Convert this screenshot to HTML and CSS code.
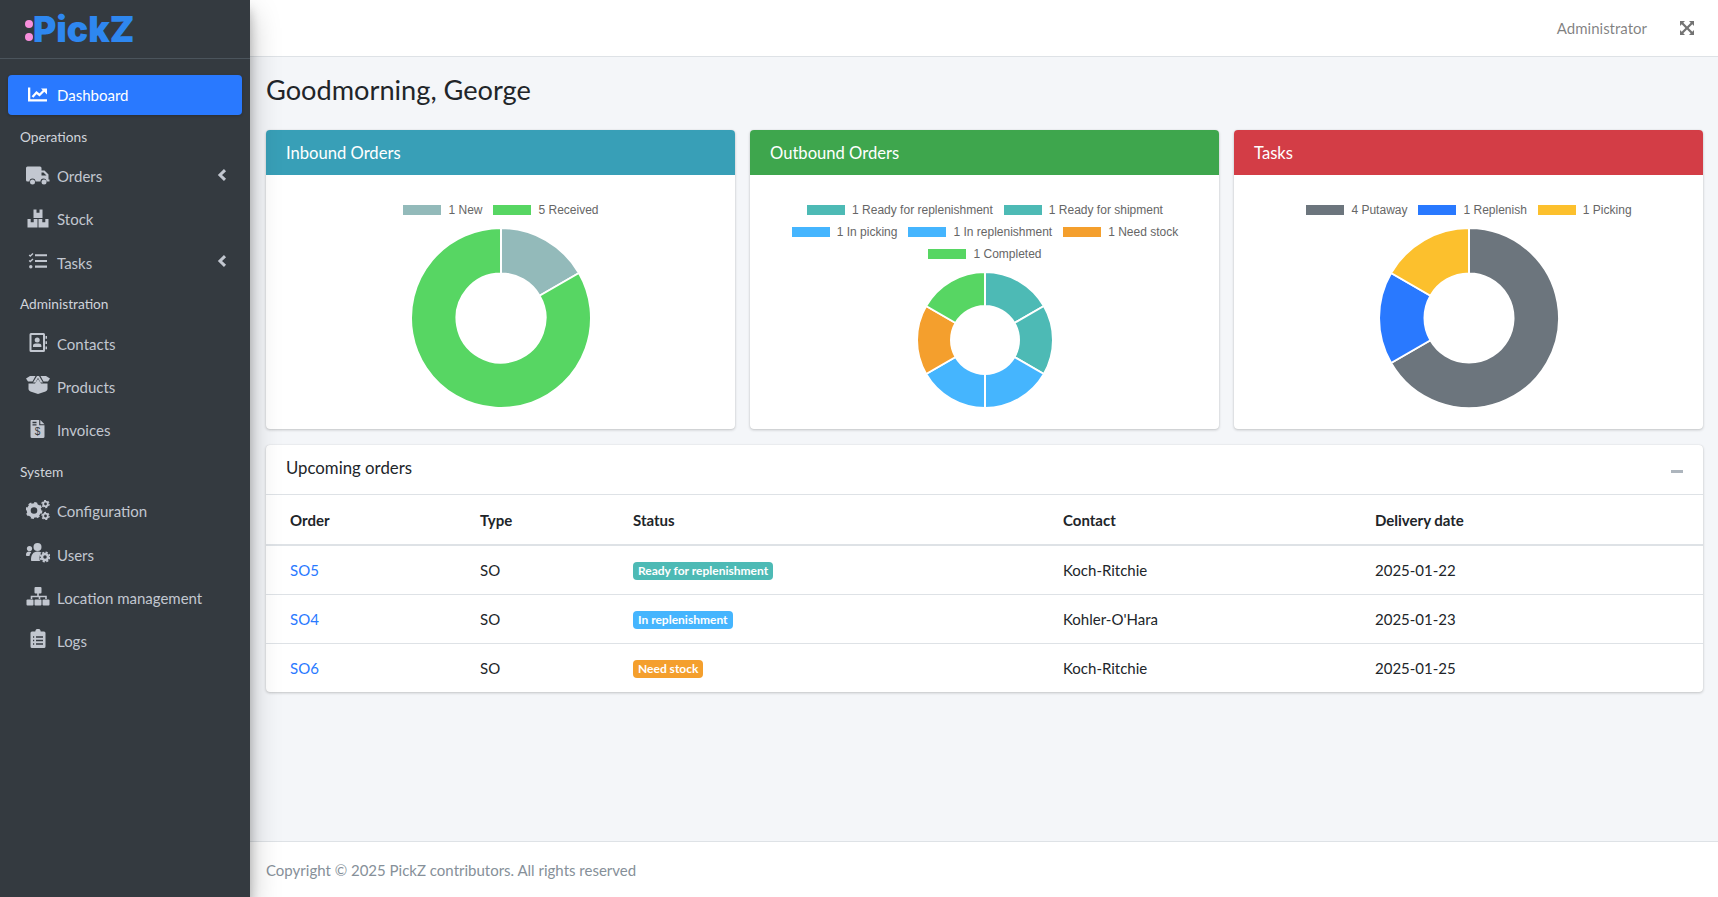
FILE: index.html
```html
<!DOCTYPE html>
<html lang="en">
<head>
  <meta charset="UTF-8">
  <title>PickZ</title>
  <link rel="stylesheet" href="styles.css">
</head>
<body>

  <!-- Sidebar -->
  <aside class="sidebar">
    <div class="brand">
      <span class="brand-dots"><i></i><i></i></span>
      <span class="brand-name">PickZ</span>
    </div>
    <nav class="menu">
      <a class="menu-item active" href="#">
        <svg class="menu-icon" viewBox="0 0 24 20"><path d="M2 3.500h2.300v11.700H21v2.300H2z"/><path d="M6.500 13l4-4.500 3 2.500 4.500-4.500" fill="none" stroke="currentColor" stroke-width="2.300"/><path d="M15 4.500h6v6z"/></svg>
        <span>Dashboard</span>
      </a>
      <div class="menu-header">Operations</div>
      <a class="menu-item" href="#">
        <svg class="menu-icon" viewBox="0 0 24 20"><g transform="translate(0 1.500)"><path d="M1.500 0H14a1.500 1.500 0 0 1 1.500 1.500V4h3l4 4v5h1v2h-3a3 3 0 0 0-6 0h-5a3 3 0 0 0-6 0H1.500A1.500 1.500 0 0 1 0 13.500v-12A1.500 1.500 0 0 1 1.500 0zM15.500 6v3h5l-3-3z" fill-rule="evenodd"/><circle cx="6.500" cy="15.500" r="2.500"/><circle cx="18" cy="15.500" r="2.500"/></g></svg>
        <span>Orders</span>
        <svg class="menu-arrow" viewBox="0 0 10 12"><path d="M8 1.200L3 6l5 4.800" fill="none" stroke="currentColor" stroke-width="3"/></svg>
      </a>
      <a class="menu-item" href="#">
        <svg class="menu-icon" viewBox="0 0 24 20"><path d="M7.500 1.500h3v3.200h3V1.500h3V10h-9zM1.500 11h3.200v3.200h3V11h3.800v8.500h-10zM12.500 11h3.800v3.200h3V11h3.200v8.500h-10z"/></svg>
        <span>Stock</span>
      </a>
      <a class="menu-item" href="#">
        <svg class="menu-icon" viewBox="0 0 24 20"><path d="M9 3.200h12v2.100H9zM9 8.900h12V11H9zM9 14.600h12v2.100H9z"/><path d="M3.200 4l1.100 1.100L7 2.500" fill="none" stroke="currentColor" stroke-width="1.400"/><path d="M3.200 9.500l1.100 1.100L7 8" fill="none" stroke="currentColor" stroke-width="1.400"/><circle cx="4.800" cy="15.700" r="1.700"/></svg>
        <span>Tasks</span>
        <svg class="menu-arrow" viewBox="0 0 10 12"><path d="M8 1.200L3 6l5 4.800" fill="none" stroke="currentColor" stroke-width="3"/></svg>
      </a>
      <div class="menu-header">Administration</div>
      <a class="menu-item" href="#">
        <svg class="menu-icon" viewBox="0 0 24 20"><path d="M5 1h12.500a1.500 1.500 0 0 1 1.500 1.500v16a1.500 1.500 0 0 1-1.500 1.500H5a1.500 1.500 0 0 1-1.500-1.500v-16A1.500 1.500 0 0 1 5 1zm.500 2v15h11.500V3z" fill-rule="evenodd"/><circle cx="11.200" cy="8" r="2.500"/><path d="M7 15v-1.300c0-1.400 1.300-2.300 2.700-2.300h3c1.400 0 2.700.9 2.700 2.300V15zM19.500 4H21v2.800h-1.500zM19.500 9.200H21V12h-1.500zM19.500 14.400H21v2.800h-1.500z"/></svg>
        <span>Contacts</span>
      </a>
      <a class="menu-item" href="#">
        <svg class="menu-icon" viewBox="0 0 24 20"><path d="M0 3.500L4 1h5.500l-3 5.500H2zM24 3.500L20 1h-5.500l3 5.500H22zM11 1h2L9.500 7.500H7zM11 1h2l4 6.500h-2.500zM2.500 8.500h6.500L12 4l3 4.500h6.500V14c0 1-1 2-2 2.500L12 19l-7.500-2.500c-1-.5-2-1.500-2-2.500z"/></svg>
        <span>Products</span>
      </a>
      <a class="menu-item" href="#">
        <svg class="menu-icon" viewBox="0 0 24 20"><path d="M5.500 1h7.700v5.300h5.300v11.200a1.500 1.500 0 0 1-1.500 1.500H6a1.500 1.500 0 0 1-1.500-1.500v-15.500A1 1 0 0 1 5.500 1zM14.300 1l4.200 4.200h-4.200z"/><path class="icon-cut" d="M6.500 3.500h4M6.500 5.800h4"/><text class="icon-dollar" x="11.500" y="16">$</text></svg>
        <span>Invoices</span>
      </a>
      <div class="menu-header">System</div>
      <a class="menu-item" href="#">
        <svg class="menu-icon" viewBox="0 0 24 20"><circle cx="8" cy="10.500" r="5.300" fill="none" stroke="currentColor" stroke-width="4"/><circle cx="8" cy="10.500" r="7.300" fill="none" stroke="currentColor" stroke-width="2.200" stroke-dasharray="3 2.730"/><circle cx="19.500" cy="4" r="2.300" fill="none" stroke="currentColor" stroke-width="1.800"/><circle cx="19.500" cy="4" r="3.600" fill="none" stroke="currentColor" stroke-width="1.200" stroke-dasharray="2 1.770"/><circle cx="19.500" cy="16" r="2.300" fill="none" stroke="currentColor" stroke-width="1.800"/><circle cx="19.500" cy="16" r="3.600" fill="none" stroke="currentColor" stroke-width="1.200" stroke-dasharray="2 1.770"/></svg>
        <span>Configuration</span>
      </a>
      <a class="menu-item" href="#">
        <svg class="menu-icon" viewBox="0 0 24 20"><circle cx="3.500" cy="5.500" r="2.600"/><circle cx="11.500" cy="4" r="4"/><path d="M0 11.500C0 9.500 1.500 8.500 3 8.500c1 0 1.800.3 2.300 1-1 1-1.600 2-1.800 3.500H1a1 1 0 0 1-1-1.500zM5 17c0-5 2-8.500 6.500-8.500 1.500 0 2.800.4 3.800 1.100C13.500 12 13 15 14 18H6c-.6 0-1-.4-1-1z"/><circle cx="19" cy="14" r="3" fill="none" stroke="currentColor" stroke-width="2.500"/><circle cx="19" cy="14" r="4.700" fill="none" stroke="currentColor" stroke-width="1.500" stroke-dasharray="2.200 1.500"/></svg>
        <span>Users</span>
      </a>
      <a class="menu-item" href="#">
        <svg class="menu-icon" viewBox="0 0 24 20"><path d="M9.500 1h5a1 1 0 0 1 1 1v4.500a1 1 0 0 1-1 1h-1.700v2.300h8v3.200h-1.600v-1.700h-4.900v1.700h-1.600v-1.700H6.300v1.700H4.700v-3.200h6.500V7.500H9.500a1 1 0 0 1-1-1V2a1 1 0 0 1 1-1z"/><rect x="0.500" y="13.500" width="7" height="6" rx="1"/><rect x="8.500" y="13.500" width="7" height="6" rx="1"/><rect x="16.500" y="13.500" width="7" height="6" rx="1"/></svg>
        <span>Location management</span>
      </a>
      <a class="menu-item" href="#">
        <svg class="menu-icon" viewBox="0 0 24 20"><path d="M6 2.500H9.300a2.700 2.700 0 0 1 5.400 0H18A1.500 1.500 0 0 1 19.500 4v13.500A1.500 1.500 0 0 1 18 19H6a1.500 1.500 0 0 1-1.500-1.500V4A1.500 1.500 0 0 1 6 2.500z"/><path class="icon-cut" d="M7 8h1.200M10 8h7M7 11.500h1.200M10 11.500h7M7 15h1.200M10 15h7"/></svg>
        <span>Logs</span>
      </a>
    </nav>
  </aside>

  <!-- Main column -->
  <div class="main">
    <header class="topbar">
      <span class="topbar-user">Administrator</span>
      <svg class="topbar-expand" viewBox="0 0 16 16"><path d="M1 1h5L4.300 2.700 8 6.400l3.700-3.700L10 1h5v5l-1.700-1.700L9.600 8l3.700 3.700L15 10v5h-5l1.700-1.700L8 9.600l-3.700 3.700L6 15H1v-5l1.700 1.700L6.400 8 2.700 4.300 1 6z"/></svg>
    </header>

    <main class="content">
      <h1 class="greeting">Goodmorning, George</h1>

      <div class="chart-row">
        <section class="card">
          <h2 class="card-title bg-info">Inbound Orders</h2>
          <div class="chart-body">
            <div class="legend">
              <span class="legend-item"><i class="c-new"></i>1 New</span>
              <span class="legend-item"><i class="c-green"></i>5 Received</span>
            </div>
            <svg class="donut big" viewBox="0 0 180 180">
              <path class="c-new" d="M90 0A90 90 0 0 1 167.940 45L128.540 67.750A44.500 44.500 0 0 0 90 45.500z"/>
              <path class="c-green" d="M167.940 45A90 90 0 1 1 90 0V45.500A44.500 44.500 0 1 0 128.540 67.750z"/>
            </svg>
          </div>
        </section>

        <section class="card">
          <h2 class="card-title bg-success">Outbound Orders</h2>
          <div class="chart-body">
            <div class="legend">
              <span class="legend-item"><i class="c-teal"></i>1 Ready for replenishment</span>
              <span class="legend-item"><i class="c-teal"></i>1 Ready for shipment</span>
              <span class="legend-item"><i class="c-sky"></i>1 In picking</span>
              <span class="legend-item"><i class="c-sky"></i>1 In replenishment</span>
              <span class="legend-item"><i class="c-orange"></i>1 Need stock</span>
              <span class="legend-item"><i class="c-green"></i>1 Completed</span>
            </div>
            <svg class="donut small" viewBox="0 0 136 136">
              <path class="c-teal" d="M68 0A68 68 0 0 1 126.890 34L97.440 51A34 34 0 0 0 68 34z"/>
              <path class="c-teal" d="M126.890 34A68 68 0 0 1 126.890 102L97.440 85A34 34 0 0 0 97.440 51z"/>
              <path class="c-sky" d="M126.890 102A68 68 0 0 1 68 136V102A34 34 0 0 0 97.440 85z"/>
              <path class="c-sky" d="M68 136A68 68 0 0 1 9.110 102L38.560 85A34 34 0 0 0 68 102z"/>
              <path class="c-orange" d="M9.110 102A68 68 0 0 1 9.110 34L38.560 51A34 34 0 0 0 38.560 85z"/>
              <path class="c-green" d="M9.110 34A68 68 0 0 1 68 0V34A34 34 0 0 0 38.560 51z"/>
            </svg>
          </div>
        </section>

        <section class="card">
          <h2 class="card-title bg-danger">Tasks</h2>
          <div class="chart-body">
            <div class="legend">
              <span class="legend-item"><i class="c-gray"></i>4 Putaway</span>
              <span class="legend-item"><i class="c-blue"></i>1 Replenish</span>
              <span class="legend-item"><i class="c-yellow"></i>1 Picking</span>
            </div>
            <svg class="donut big" viewBox="0 0 180 180">
              <path class="c-gray" d="M90 0A90 90 0 1 1 12.060 135L51.460 112.250A44.500 44.500 0 1 0 90 45.500z"/>
              <path class="c-blue" d="M12.060 135A90 90 0 0 1 12.060 45L51.460 67.750A44.500 44.500 0 0 0 51.460 112.250z"/>
              <path class="c-yellow" d="M12.060 45A90 90 0 0 1 90 0V45.500A44.500 44.500 0 0 0 51.460 67.750z"/>
            </svg>
          </div>
        </section>
      </div>

      <section class="card orders-card">
        <div class="orders-head">
          <h2 class="orders-title">Upcoming orders</h2>
          <span class="collapse-btn"></span>
        </div>
        <table class="orders">
          <thead>
            <tr><th class="col-order">Order</th><th class="col-type">Type</th><th class="col-status">Status</th><th class="col-contact">Contact</th><th>Delivery date</th></tr>
          </thead>
          <tbody>
            <tr><td><a href="#">SO5</a></td><td>SO</td><td><span class="badge c-teal-bg">Ready for replenishment</span></td><td>Koch-Ritchie</td><td>2025-01-22</td></tr>
            <tr><td><a href="#">SO4</a></td><td>SO</td><td><span class="badge c-sky-bg">In replenishment</span></td><td>Kohler-O'Hara</td><td>2025-01-23</td></tr>
            <tr><td><a href="#">SO6</a></td><td>SO</td><td><span class="badge c-orange-bg">Need stock</span></td><td>Koch-Ritchie</td><td>2025-01-25</td></tr>
          </tbody>
        </table>
      </section>
    </main>

    <footer class="footer">Copyright © 2025 PickZ contributors. All rights reserved</footer>
  </div>

</body>
</html>
```

FILE: styles.css
```css
* {
  box-sizing: border-box;
}

body {
  margin: 0;
  height: 897px;
  display: flex;
  overflow: hidden;
  font-family: "Lato", sans-serif;
  font-size: 15px;
  color: #212529;
  background: #f4f6f9;
}

a {
  text-decoration: none;
}

/* Sidebar */
.sidebar {
  width: 250px;
  flex-shrink: 0;
  background: #343a40;
  box-shadow: 0 14px 28px rgba(0, 0, 0, 0.25), 0 10px 10px rgba(0, 0, 0, 0.22);
  position: relative;
  z-index: 2;
}

.brand {
  height: 59px;
  display: flex;
  align-items: center;
  padding-left: 25px;
  border-bottom: 1px solid #4b545c;
}

.brand-dots {
  display: flex;
  flex-direction: column;
  gap: 5px;
  margin-right: 0;
  margin-top: 3px;
}

.brand-dots i {
  width: 8px;
  height: 8px;
  border-radius: 50%;
  background: #f78fdc;
}

.brand-name {
  font-family: "Inter", sans-serif;
  font-weight: 900;
  font-size: 35.5px;
  line-height: 40px;
  margin-top: 1px;
  color: #2e87f0;
}

.menu {
  padding: 16px 8px 0;
}

.menu-item {
  height: 40px;
  margin-bottom: 3.2px;
  padding-left: 18px;
  display: flex;
  align-items: center;
  gap: 7px;
  border-radius: 4px;
  color: #c2c7d0;
}

.menu-item.active {
  background: #2979ff;
  color: #fff;
  box-shadow: 0 1px 3px rgba(0, 0, 0, 0.2);
}

.menu-icon {
  width: 24px;
  height: 20px;
  flex-shrink: 0;
  margin-top: -3px;
  fill: currentColor;
}

.menu-arrow {
  width: 10px;
  height: 12px;
  margin-left: auto;
  margin-right: 15px;
  margin-top: -3px;
}

.icon-cut {
  fill: none;
  stroke: #343a40;
  stroke-width: 1.3;
}

.icon-dollar {
  font-family: "Liberation Sans", sans-serif;
  font-size: 10px;
  fill: #343a40;
  text-anchor: middle;
}

.menu-header {
  height: 38px;
  padding: 0 0 2px 12px;
  display: flex;
  align-items: center;
  font-size: 13.7px;
  color: #d0d4db;
}

/* Main column */
.main {
  flex: 1;
  min-width: 0;
  display: flex;
  flex-direction: column;
}

.topbar {
  height: 57px;
  flex-shrink: 0;
  background: #fff;
  border-bottom: 1px solid #dee2e6;
  display: flex;
  align-items: center;
  justify-content: flex-end;
  padding-right: 23px;
  gap: 32px;
}

.topbar-user {
  color: rgba(0, 0, 0, 0.5);
}

.topbar-expand {
  width: 16px;
  height: 16px;
  fill: #737373;
}

.content {
  flex: 1;
  padding: 12px 15px 0 16px;
}

.greeting {
  margin: 0 0 19px;
  font-size: 27.2px;
  line-height: 41px;
  font-weight: 400;
}

.chart-row {
  display: grid;
  grid-template-columns: repeat(3, 1fr);
  gap: 15px;
  margin-top: 20px;
  margin-bottom: 16px;
}

.card {
  background: #fff;
  border-radius: 4px;
  box-shadow: 0 0 1px rgba(0, 0, 0, 0.13), 0 1px 3px rgba(0, 0, 0, 0.2);
  overflow: hidden;
}

.card-title {
  margin: 0;
  height: 45px;
  padding-left: 20px;
  display: flex;
  align-items: center;
  font-size: 16.6px;
  font-weight: 400;
  color: #fff;
}

.bg-info {
  background: #389fb7;
}

.bg-success {
  background: #3ea64d;
}

.bg-danger {
  background: #d33d46;
}

.chart-body {
  height: 254px;
  padding-top: 24px;
  padding-bottom: 21px;
  display: flex;
  flex-direction: column;
  align-items: center;
  justify-content: space-between;
}

.legend {
  display: flex;
  flex-wrap: wrap;
  justify-content: center;
  width: 430px;
  font-family: "Liberation Sans", sans-serif;
  font-size: 12px;
  line-height: 22px;
  color: #666;
}

.legend-item {
  display: flex;
  align-items: center;
  margin: 0 5px;
}

.legend-item i {
  width: 38px;
  height: 10px;
  margin-left: 1px;
  margin-right: 7px;
  display: block;
}

.donut {
  display: block;
}

.donut path {
  stroke: #fff;
  stroke-width: 2;
}

.donut.big {
  width: 180px;
  height: 180px;
}

.donut.small {
  width: 136px;
  height: 136px;
}

i.c-new { background: #93baba; }
i.c-green { background: #57d663; }
i.c-teal { background: #4dbab5; }
i.c-sky { background: #45b5fe; }
i.c-orange { background: #f49f2d; }
i.c-gray { background: #6c757d; }
i.c-blue { background: #2979ff; }
i.c-yellow { background: #fcc02d; }

path.c-new { fill: #93baba; }
path.c-green { fill: #57d663; }
path.c-teal { fill: #4dbab5; }
path.c-sky { fill: #45b5fe; }
path.c-orange { fill: #f49f2d; }
path.c-gray { fill: #6c757d; }
path.c-blue { fill: #2979ff; }
path.c-yellow { fill: #fcc02d; }

/* Orders table */
.orders-head {
  height: 50px;
  padding: 0 20px 5px;
  display: flex;
  align-items: center;
  justify-content: space-between;
  border-bottom: 1px solid #dee2e6;
}

.orders-title {
  margin: 0;
  font-size: 16.8px;
  font-weight: 400;
}

.collapse-btn {
  width: 12px;
  height: 3px;
  background: #adb5bd;
  margin-top: 8px;
}

.orders {
  width: 100%;
  border-collapse: collapse;
}

.orders th {
  height: 50px;
  padding: 0 24px;
  text-align: left;
  font-weight: 700;
  border-bottom: 2px solid #dee2e6;
}

.orders td {
  height: 49px;
  padding: 0 24px;
  border-top: 1px solid #dee2e6;
}

.orders tbody tr:first-child td {
  border-top: 0;
}

.orders a {
  color: #2979ff;
}

.col-order {
  width: 190px;
}

.col-type {
  width: 153px;
}

.col-status {
  width: 430px;
}

.col-contact {
  width: 312px;
}

.badge {
  display: inline-block;
  padding: 2px 5px;
  border-radius: 4px;
  font-size: 12px;
  font-weight: 700;
  line-height: 14px;
  color: #fff;
  vertical-align: -1px;
}

.c-teal-bg { background: #4dbab5; }
.c-sky-bg { background: #45b5fe; }
.c-orange-bg { background: #f49f2d; }

.footer {
  height: 56px;
  flex-shrink: 0;
  background: #fff;
  border-top: 1px solid #dee2e6;
  padding-left: 16px;
  display: flex;
  align-items: center;
  color: #869099;
}
```
